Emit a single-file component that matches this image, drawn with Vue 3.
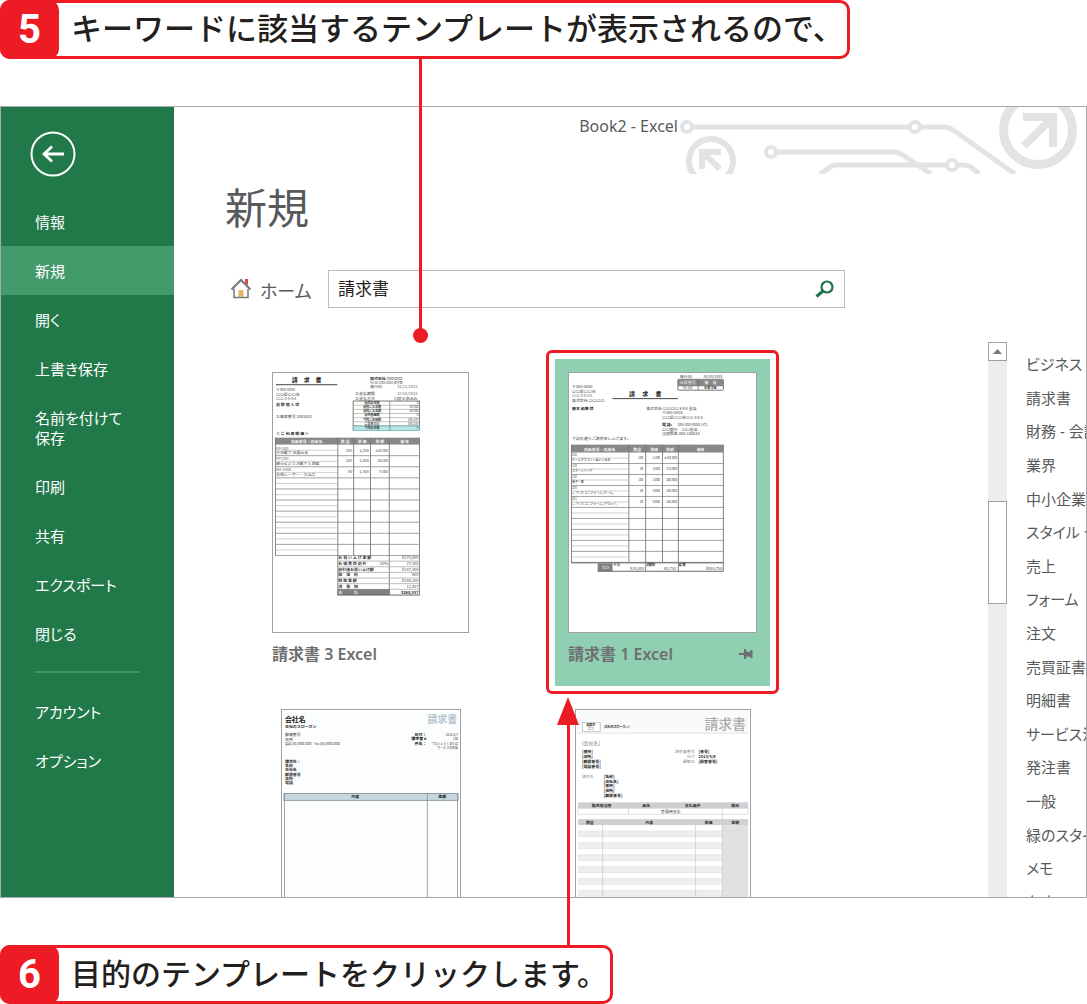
<script setup>
import { ref } from 'vue'

const keyword = ref('請求書')

const menu = [
  { label: '情報' },
  { label: '新規', active: true },
  { label: '開く' },
  { label: '上書き保存' },
  { label: '名前を付けて\n保存' },
  { label: '印刷' },
  { label: '共有' },
  { label: 'エクスポート' },
  { label: '閉じる' },
]
const footMenu = [{ label: 'アカウント' }, { label: 'オプション' }]

const categories = [
  'ビジネス', '請求書', '財務 - 会計', '業界', '中小企業', 'スタイル セット', '売上', 'フォーム', '注文',
  '売買証書', '明細書', 'サービス注文', '発注書', '一般', '緑のスタイル', 'メモ', '在庫',
]

// Text entries: [x, baseline, text, size, anchor, fill, weight]
const docOne = {
  texts: [
    [34, 9, '請　求　書', 6, 'middle', '#222', 700],
    [98, 7, '株式会社 〇〇〇〇', 4, 'start', '#333', 700],
    [98, 11, 'Tel 00-0000-0000 東京都', 3, 'start', '#555', 400],
    [98, 15, '発行日:', 4, 'start', '#333', 400],
    [146, 15, '11/11/2013', 4, 'end', '#555', 400],
    [3, 18, '〒xxx-xxxx', 4, 'start', '#444', 400],
    [3, 23, '〇〇県〇〇市', 4, 'start', '#333', 400],
    [3, 27, '〇〇 x-x-x-x', 4, 'start', '#555', 400],
    [3, 33, '自 野 宿 人 様', 4, 'start', '#333', 700],
    [3, 45, 'お客様番号 2001001', 4, 'start', '#333', 400],
    [83, 22, 'お支払期限', 4, 'start', '#333', 400],
    [146, 22, '12/10/2013', 4, 'end', '#555', 400],
    [83, 27, 'お支払方法', 4, 'start', '#333', 400],
    [146, 27, '口座お振込み', 4, 'end', '#444', 400],
    [3, 62, '＜ ご 利 用 明 細 ＞', 4, 'start', '#222', 700],
    [34, 70, '商品番号・商品名', 4, 'middle', '#eee', 700],
    [73, 70, '数 量', 4, 'middle', '#eee', 700],
    [90, 70, '単 価', 4, 'middle', '#eee', 700],
    [108, 70, '金 額', 4, 'middle', '#eee', 700],
    [133, 70, '備 考', 4, 'middle', '#eee', 700],
    ...['前回請求額', '前回ご入金額', '前回ご入金額', '前回繰越額', '今回ご利用額', 'ご請求合計', '今回請求額'].map(
      (t, i) => [100, 31 + i * 4.2, t, 3, 'middle', '#333', 700]),
    ...['0', '50,000', '50,000', '0', '288,537', '288,537', '0'].map(
      (t, i) => [147, 31 + i * 4.2, t, 3, 'end', '#444', 400]),
    [3, 77, 'FP-100', 4, 'start', '#555', 400],
    [3, 82, '万年靴下 日焼止め', 4, 'start', '#333', 400],
    [3, 88, 'FP-200', 4, 'start', '#555', 400],
    [3, 93, '紳士ビジネス靴下 5 足組', 4, 'start', '#333', 400],
    [3, 99, 'SH-1000', 4, 'start', '#555', 400],
    [3, 104, '水性レーザー・カルロ', 4, 'start', '#333', 400],
    ...[['100', '1,200', '¥120,000'], ['100', '1,000', '100,000'], ['50', '1,500', '75,000']].flatMap((r, i) => [
      [80, 79 + i * 11, r[0], 4, 'end', '#444', 400],
      [97, 79 + i * 11, r[1], 4, 'end', '#444', 400],
      [116, 79 + i * 11, r[2], 3, 'end', '#444', 400],
    ]),
    ...['お 買 い 上 げ 金 額', 'お 得 意 様 割 引', '割引後お買い上げ額', '配　送　料', '税 抜 金 額', '消　費　税'].map(
      (t, i) => [66, 188 + i * 5.7, t, 4, 'start', '#333', 700]),
    ...['¥275,000', '27,500', '¥247,500', '600', '¥248,100', '12,407'].map(
      (t, i) => [147, 188 + i * 5.7, t, 4, 'end', '#444', 400]),
    [116, 194, '10%', 4, 'end', '#444', 400],
    [66, 223, '合　　　計', 4, 'start', '#eee', 700],
    [147, 223, '¥260,537', 4, 'end', '#222', 700],
  ],
}

const docTwo = {
  texts: [
    [112, 5, '発行日:', 4, 'start', '#333', 400],
    [155, 5, 'xx/xx/xxxx', 4, 'end', '#555', 400],
    [120, 11, '伝票番号', 4, 'middle', '#eee', 400],
    [143, 11, '担　当', 4, 'middle', '#eee', 700],
    [120, 16, '00-100', 3, 'middle', '#444', 400],
    [143, 16, '佐賀 美紀', 3, 'middle', '#222', 700],
    [3, 15, '〒000-0000', 4, 'start', '#444', 400],
    [3, 20, '〇〇県〇〇市', 4, 'start', '#444', 400],
    [3, 24, '〇〇 x-x-x-x', 4, 'start', '#666', 400],
    [3, 29, '株式会社 〇〇〇〇', 4, 'start', '#333', 400],
    [3, 37, '鹿本 和美 様', 4, 'start', '#222', 700],
    [77, 23, '請　 求　 書', 6, 'middle', '#222', 700],
    [78, 37, '株式会社 〇〇〇〇 x-x-x 支店', 4, 'start', '#333', 400],
    [94, 41, '〒000-0000', 4, 'start', '#444', 400],
    [94, 46, '〇〇県〇〇市〇〇 x-x-x', 4, 'start', '#444', 400],
    [94, 53, '電 話:', 4, 'start', '#222', 700],
    [110, 53, 'xxx-xxx-xxxx (代)', 4, 'start', '#444', 400],
    [94, 58, '〇〇銀行　〇〇支店', 4, 'start', '#333', 400],
    [94, 62, '当座預金 000-100010', 4, 'start', '#333', 400],
    [3, 67, '下記の通りご請求申し上げます。', 4, 'start', '#333', 400],
    [31, 78, '商品番号・商品名', 4, 'middle', '#eee', 700],
    [69, 78, '数量', 4, 'middle', '#eee', 700],
    [86, 78, '単価', 4, 'middle', '#eee', 700],
    [102, 78, '金額', 4, 'middle', '#eee', 700],
    [133, 78, '備考', 4, 'middle', '#eee', 700],
    ...[
      ['100', 'チームマスコットぬいぐるみ', '100', '1,200', '¥120,000'],
      ['120', 'スポーツバッグ', '50', '3,500', '175,000'],
      ['130', '帽子・青', '100', '2,000', '200,000'],
      ['200', 'レプリカ ユニフォーム (ホーム)', '20', '8,000', '160,000'],
      ['201', 'レプリカ ユニフォーム (アウェイ)', '20', '8,000', '160,000'],
    ].flatMap((r, i) => [
      [3, 84 + i * 11, r[0], 3, 'start', '#555', 400],
      [3, 89 + i * 11, r[1], 3, 'start', '#222', 400],
      [75, 87 + i * 11, r[2], 3, 'end', '#333', 400],
      [92, 87 + i * 11, r[3], 3, 'end', '#333', 400],
      [109, 87 + i * 11, r[4], 3, 'end', '#333', 400],
    ]),
    [37, 198, '合計', 4, 'middle', '#eee', 400],
    [45, 195, '小 計', 3, 'start', '#222', 700],
    [76, 199, '815,000', 4, 'end', '#444', 400],
    [78, 195, '消費税', 3, 'start', '#222', 700],
    [108, 199, '40,750', 4, 'end', '#444', 400],
    [111, 195, '総 額', 3, 'start', '#222', 700],
    [155, 199, '¥855,750', 4, 'end', '#333', 400],
  ],
}

const docThree = [
  [3, 12, '会社名', 7, 'start', '#222', 700],
  [3, 18, '会社のスローガン', 4, 'start', '#333', 700],
  [177, 13, '請求書', 10, 'end', '#b4c4cf', 700],
  [3, 26, '郵便番号', 4, 'start', '#333', 400],
  [3, 31, '住所', 4, 'start', '#333', 400],
  [3, 35, '電話 (00) 0000-0000　Fax (00) 0000-0000', 3, 'start', '#333', 400],
  ...['日付：', '請求書 #', '件名：'].map((t, i) => [146, 26 + i * 4.3, t, 4, 'end', '#222', 700]),
  ...['2012/5/7', '100', 'プロジェクトまたは', 'サービスの内容'].map((t, i) => [178, 26 + i * 4.3, t, 3, 'end', '#333', 400]),
  ...['請求先：', '名前', '会社名', '郵便番号', '住所', '電話'].map((t, i) => [3, 53 + i * 4.4, t, 4, 'start', '#333', 700]),
  [74, 89, '内容', 4, 'middle', '#222', 700],
  [162, 89, '金額', 4, 'middle', '#222', 700],
]

const docFour = [
  [15, 16, '組織の', 3, 'middle', '#333', 700],
  [15, 20, 'ロゴ', 3, 'middle', '#444', 400],
  [28, 18, '[会社のスローガン]', 3, 'start', '#222', 700],
  [172, 19, '請求書', 14, 'end', '#a9a9a9', 500],
  [6, 35, '[会社名]', 5, 'start', '#777', 400],
  ...['[番地]', '[住所]', '[郵便番号]', '[電話番号]'].map((t, i) => [6, 43 + i * 5, t, 4, 'start', '#222', 700]),
  ...['請求書番号', '日付', '顧客ID'].map((t, i) => [120, 43 + i * 5, t, 4, 'end', '#888', 400]),
  ...['[番号]', '2013/5/8', '[顧客番号]'].map((t, i) => [124, 43 + i * 5, t, 4, 'start', '#222', 700]),
  [6, 68, '請求先', 4, 'start', '#888', 400],
  ...['[名前]', '[会社名]', '[番地]', '[住所]', '[郵便番号]'].map((t, i) => [28, 68 + i * 5, t, 4, 'start', '#222', 700]),
  [26, 98, '販売担当者', 4, 'middle', '#333', 700],
  [71, 98, '品名', 4, 'middle', '#333', 700],
  [118, 98, '支払条件', 4, 'middle', '#333', 700],
  [161, 98, '期日', 4, 'middle', '#333', 700],
  [96, 104, '受領時支払', 4, 'middle', '#333', 400],
  [14, 115, '数量', 4, 'middle', '#333', 700],
  [74, 115, '内容', 4, 'middle', '#333', 700],
  [134, 115, '単価', 4, 'middle', '#333', 700],
  [161, 115, '金額', 4, 'middle', '#333', 700],
]
</script>

<template>
  <div class="page">
    <div class="callout">
      <span class="step">5</span>
      <p>キーワードに該当するテンプレートが表示されるので、</p>
      <span class="lead-down"></span>
    </div>

    <div class="window">
      <nav class="sidebar">
        <button class="back" type="button" aria-label="戻る">
          <svg width="46" height="46" viewBox="0 0 46 46" fill="none" stroke="#fff">
            <circle cx="23" cy="23" r="21.5" stroke-width="2" />
            <path d="M34 23H14M22 15.500L14 23L22 30.500" stroke-width="2.800" />
          </svg>
        </button>
        <a v-for="m in menu" :key="m.label" href="#" class="item" :class="{ active: m.active }">{{ m.label }}</a>
        <hr />
        <a v-for="m in footMenu" :key="m.label" href="#" class="item">{{ m.label }}</a>
      </nav>

      <main class="main">
        <header class="titlebar">
          <span class="title">Book2 - Excel</span>
          <svg class="circuit" width="408" height="67" viewBox="0 0 408 67" fill="none" stroke="#e1e3e5">
            <circle cx="9" cy="20" r="5" stroke-width="4" />
            <path d="M15 20H231M243 20H267Q271 20 275 23L337 67" stroke-width="5" />
            <circle cx="237" cy="20" r="5" stroke-width="4" />
            <circle cx="33" cy="54" r="22" stroke-width="6" />
            <path d="M24 62V45H43M25 46L42 62" stroke-width="6" />
            <circle cx="93" cy="45" r="5" stroke-width="4" />
            <path d="M99 45H217Q221 45 225 48L253 67" stroke-width="5" />
            <path d="M142 67L151 61Q154 58 158 58H268M280 58H285Q289 58 293 60L301 67" stroke-width="5" />
            <circle cx="274" cy="58" r="5" stroke-width="4" />
            <circle cx="360" cy="23" r="34.5" stroke-width="9" />
            <path d="M345 10H375V40M374 11L346 39" stroke-width="8" />
          </svg>
        </header>

        <h1>新規</h1>

        <form class="search-row" @submit.prevent>
          <a href="#" class="home">
            <svg width="22" height="22" viewBox="0 0 22 22" fill="none">
              <path d="M15 1H18V7L15 5Z" fill="#e0483c" />
              <path d="M4 11V19.500H18V11" stroke="#77787b" stroke-width="1.500" />
              <path d="M1.500 11.500L11 2L20.500 11.500" stroke="#77787b" stroke-width="2" />
              <rect x="8.500" y="12" width="5" height="7" fill="#e5b36b" />
            </svg>
            <span>ホーム</span>
          </a>
          <div class="search">
            <input v-model="keyword" type="text" aria-label="テンプレートの検索" />
            <button type="submit" aria-label="検索">
              <svg width="20" height="20" viewBox="0 0 20 20" fill="none" stroke="#217346">
                <circle cx="12" cy="8" r="5.500" stroke-width="2.200" />
                <path d="M8 12L1.500 17.500" stroke-width="3" />
              </svg>
            </button>
          </div>
        </form>

        <div class="browser">
          <section class="results">
            <article class="tile">
              <div class="card">
                <svg class="sheet" width="197" height="261" viewBox="0 0 197 261">
                  <path d="M3 11.500H65" stroke="#444" />
                  <rect x="81" y="28" width="67" height="29" fill="#fff" stroke="#777" stroke-width="1" />
                  <rect x="81" y="53" width="67" height="5" fill="#b5e5e7" stroke="#4c9ca0" stroke-width="0.500" />
                  <path v-for="i in 6" :key="i" :d="`M81 ${28 + i * 4.200}H148`" stroke="#999" stroke-width="0.600" />
                  <path d="M118 28V58" stroke="#777" stroke-width="0.700" />
                  <rect x="2" y="65" width="146" height="7" fill="#87888a" />
                  <path v-for="i in 10" :key="'r' + i" :d="`M2 ${72 + i * 11.200}H148`" stroke="#888" stroke-width="0.800" />
                  <path v-for="i in 10" :key="'h' + i" :d="`M2 ${66.500 + i * 11.200}H65`" stroke="#c4c4c4" stroke-width="0.800" />
                  <path d="M2.500 65V184M65.500 65V224M81.500 65V184M98.500 65V184M117.500 65V224M148 65V224" stroke="#777" stroke-width="0.900" />
                  <path v-for="i in 6" :key="'t' + i" :d="`M65 ${184 + i * 5.700}H148`" stroke="#aaa" stroke-width="0.800" />
                  <rect x="65" y="218" width="53" height="6" fill="#808183" />
                  <path d="M65 224H148" stroke="#666" />
                  <text
                    v-for="(t, i) in docOne.texts" :key="'x' + i" :x="t[0]" :y="t[1]" :font-size="t[3]"
                    :text-anchor="t[4]" :fill="t[5]" :font-weight="t[6]"
                  >{{ t[2] }}</text>
                </svg>
                <div class="caption"><h2>請求書 3 Excel</h2></div>
              </div>
            </article>

            <article class="tile selected">
              <div class="card">
                <svg class="sheet" width="189" height="261" viewBox="0 0 189 261">
                  <rect x="110" y="6" width="46" height="11" rx="1" fill="#fff" stroke="#777" />
                  <rect x="110" y="6" width="46" height="7" fill="#87888a" />
                  <path d="M130.500 6V17" stroke="#666" stroke-width="0.800" />
                  <path d="M44 25.500H110" stroke="#444" />
                  <rect x="2" y="72" width="154" height="8" fill="#87888a" />
                  <path v-for="i in 10" :key="i" :d="`M2 ${80 + i * 11.100}H156`" stroke="#888" stroke-width="0.800" />
                  <path v-for="i in 10" :key="'h' + i" :d="`M2 ${74.500 + i * 11.100}H60`" stroke="#c4c4c4" stroke-width="0.800" />
                  <path d="M2.500 72V191M60.500 72V191M77.500 72V200M94.500 72V191M110.500 72V200M156 72V200" stroke="#777" stroke-width="0.900" />
                  <rect x="29" y="192" width="15" height="8" fill="#808183" />
                  <path d="M2 191.500H156M29 200H156" stroke="#666" />
                  <text
                    v-for="(t, i) in docTwo.texts" :key="'x' + i" :x="t[0]" :y="t[1]" :font-size="t[3]"
                    :text-anchor="t[4]" :fill="t[5]" :font-weight="t[6]"
                  >{{ t[2] }}</text>
                </svg>
                <div class="caption">
                  <h2>請求書 1 Excel</h2>
                  <button type="button" class="pin" aria-label="一覧に固定">
                    <svg width="14" height="10" viewBox="0 0 14 10" fill="#6d6e71">
                      <path d="M0 4H5V0H6.500L8 3H10.500L12 1H13.500V9H12L10.500 7.500H8L6.500 10H5V6H0Z" />
                    </svg>
                  </button>
                </div>
              </div>
            </article>

            <article class="tile">
              <div class="card">
                <svg class="sheet" width="180" height="240" viewBox="0 0 180 240">
                  <rect x="1" y="1" width="178" height="239" fill="#fcfdfd" />
                  <rect x="2" y="84" width="176" height="7" fill="#c5d8df" stroke="#7f8a90" stroke-width="0.800" />
                  <path d="M2.500 84V240M147 84V240M177.500 84V240" stroke="#888c90" stroke-width="0.800" />
                  <text
                    v-for="(t, i) in docThree" :key="i" :x="t[0]" :y="t[1]" :font-size="t[3]"
                    :text-anchor="t[4]" :fill="t[5]" :font-weight="t[6]"
                  >{{ t[2] }}</text>
                </svg>
              </div>
            </article>

            <article class="tile">
              <div class="card">
                <svg class="sheet" width="176" height="240" viewBox="0 0 176 240">
                  <rect x="1" y="1" width="174" height="22" fill="#fafafa" />
                  <path d="M1 23H175" stroke="#e3e3e3" />
                  <rect x="6.500" y="12.500" width="18" height="9" fill="#fff" stroke="#bbb" stroke-width="0.800" />
                  <rect x="2" y="93" width="172" height="6" fill="#cfd0d1" />
                  <rect x="2" y="99" width="172" height="6" fill="#fff" stroke="#ccc" stroke-width="0.600" />
                  <rect x="2" y="110" width="172" height="6" fill="#cfd0d1" />
                  <rect v-for="i in 11" :key="'s' + i" x="2" :y="110 + i * 12" width="172" height="6" fill="#eeeeef" />
                  <rect x="148" y="116" width="26" height="130" fill="#e0e1e2" />
                  <path v-for="i in 21" :key="'l' + i" :d="`M2 ${116 + i * 6}H174`" stroke="#ddd" stroke-width="0.500" />
                  <path d="M27 110V240M121 110V240M148 93V240M53 99V105" stroke="#ccc" stroke-width="0.800" />
                  <text
                    v-for="(t, i) in docFour" :key="i" :x="t[0]" :y="t[1]" :font-size="t[3]"
                    :text-anchor="t[4]" :fill="t[5]" :font-weight="t[6]"
                  >{{ t[2] }}</text>
                </svg>
              </div>
            </article>
          </section>

          <div class="scrollbar">
            <button type="button" aria-label="上へスクロール">
              <svg width="9" height="5" viewBox="0 0 9 5"><path d="M0 5L4.500 0L9 5Z" fill="#77787b" /></svg>
            </button>
            <div class="thumb"></div>
          </div>

          <ul class="categories">
            <li v-for="c in categories" :key="c"><a href="#">{{ c }}</a></li>
          </ul>
        </div>
      </main>
    </div>

    <div class="callout callout-small">
      <span class="step">6</span>
      <p>目的のテンプレートをクリックします。</p>
      <svg class="lead-up" width="22" height="251" viewBox="0 0 22 251" fill="#ed1c24">
        <path d="M11 0L22 28H13V251H10V28H0Z" />
      </svg>
    </div>
  </div>
</template>

<style>
body {
  margin: 0;
  background: #fff;
}
</style>

<style scoped>
.page {
  height: 100vh;
  display: flex;
  flex-direction: column;
  gap: 47px;
  overflow: hidden;
  font-family: "Noto Sans", "Noto Sans CJK JP", sans-serif;
  font-size: 16px;
  color: #58595b;
}
a {
  color: inherit;
  text-decoration: none;
}
button {
  padding: 0;
  border: 0;
  background: none;
  cursor: pointer;
}
svg {
  display: block;
}

/* Numbered instructions */
.callout {
  position: relative;
  z-index: 2;
  align-self: flex-start;
  flex: none;
  display: flex;
  align-items: stretch;
  box-sizing: border-box;
  height: 59px;
  padding-right: 3px;
  border: 3px solid #ed1c24;
  border-radius: 10px;
  background: #fff;
  color: #231f20;
}
.step {
  display: flex;
  align-items: center;
  justify-content: center;
  width: 59px;
  margin: -3px 0 -3px -3px;
  border-radius: 10px;
  background: #ed1c24;
  color: #fff;
  font-family: Roboto, sans-serif;
  font-size: 40px;
  font-weight: 700;
}
.callout p {
  margin: 0;
  padding-left: 12px;
  font-family: "Noto Sans CJK JP", sans-serif;
  font-size: 31px;
  font-weight: 500;
  line-height: 48px;
  white-space: nowrap;
}
.callout-small p {
  font-size: 30px;
}
.lead-down {
  position: absolute;
  top: 100%;
  left: 416px;
  width: 3px;
  height: 280px;
  background: #ed1c24;
}
.lead-down::after {
  content: "";
  position: absolute;
  left: -6px;
  bottom: -7px;
  width: 15px;
  height: 15px;
  border-radius: 50%;
  background: #ed1c24;
}
.lead-up {
  position: absolute;
  bottom: 100%;
  left: 554px;
}

/* Application window */
.window {
  flex: 1;
  min-height: 0;
  display: flex;
  border: 1px solid #a7a9ac;
  overflow: hidden;
}
.sidebar {
  flex: none;
  width: 173px;
  padding-top: 24px;
  background: #217849;
  color: #fff;
  font-size: 15px;
}
.back {
  display: block;
  margin: 0 0 20px 29px;
}
.item {
  display: block;
  padding: 15px 0 14px 34px;
  line-height: 20px;
  white-space: pre;
  font-feature-settings: "palt";
}
.item.active {
  background: #439a6a;
}
.sidebar hr {
  height: 2px;
  margin: 13px 34px 14px;
  border: 0;
  background: #439467;
}

.main {
  flex: 1;
  min-width: 0;
  display: flex;
  flex-direction: column;
}
.titlebar {
  flex: none;
  display: flex;
  justify-content: flex-end;
}
.title {
  line-height: 38px;
}
h1 {
  margin: 4px 0 0 51px;
  font-size: 42px;
  font-weight: 400;
  line-height: 60px;
}
.search-row {
  flex: none;
  display: flex;
  align-items: center;
  margin: 31px 241px 0 56px;
}
.home {
  display: flex;
  align-items: center;
  gap: 8px;
  width: 98px;
  font-size: 18px;
  line-height: 36px;
  font-feature-settings: "palt";
}
.home span {
  padding-top: 4px;
}
.search {
  flex: 1;
  display: flex;
  align-items: center;
  height: 36px;
  padding-right: 9px;
  border: 1px solid #babcbe;
}
.search input {
  flex: 1;
  min-width: 0;
  padding: 0 0 3px 9px;
  border: 0;
  outline: 0;
  background: none;
  font: inherit;
  font-size: 17px;
  color: #231f20;
}

.browser {
  flex: 1;
  min-height: 0;
  display: flex;
  margin-top: 33px;
}
.results {
  flex: 1;
  min-width: 0;
  display: grid;
  grid-template-columns: 215px 215px;
  grid-auto-rows: 327px;
  gap: 10px 77px;
  padding: 17px 0 0 89px;
}
.tile {
  position: relative;
  display: flex;
  justify-content: center;
  padding-top: 13px;
}
.tile.selected {
  background: #90cfb1;
}
.tile.selected::after {
  content: "";
  position: absolute;
  inset: -9px -9px -8px;
  border: 3px solid #ed1c24;
  border-radius: 6px;
}
.sheet {
  box-sizing: border-box;
  border: 1px solid #a0a1a4;
  background: #fff;
  font-family: "Noto Sans CJK JP", sans-serif;
}
.caption {
  display: flex;
  align-items: center;
  justify-content: space-between;
  padding: 9px 4px 0 0;
  color: #6d6e71;
}
h2 {
  margin: 0;
  font-size: 16px;
  font-weight: 600;
  line-height: 24px;
}

.scrollbar {
  flex: none;
  width: 19px;
  background: #ecedef;
}
.scrollbar button {
  display: flex;
  align-items: center;
  justify-content: center;
  box-sizing: border-box;
  width: 19px;
  height: 19px;
  border: 1px solid #a0a1a4;
  background: #fff;
}
.thumb {
  box-sizing: border-box;
  height: 103px;
  margin-top: 140px;
  border: 1px solid #a0a1a4;
  background: #fff;
}
.categories {
  flex: none;
  display: flex;
  flex-direction: column;
  width: 60px;
  margin: 5px 0 -21px 19px;
  padding: 0;
  list-style: none;
  font-size: 15px;
  white-space: nowrap;
  overflow: hidden;
  font-feature-settings: "palt";
}
.categories li {
  flex: 1;
  display: flex;
  align-items: center;
}
</style>
